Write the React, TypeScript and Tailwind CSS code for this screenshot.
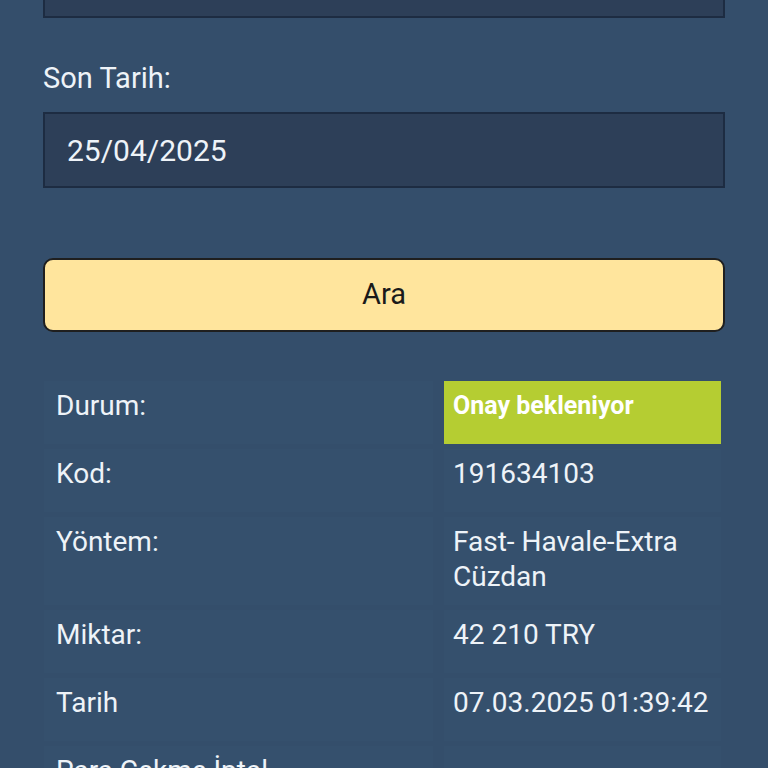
const rows: { label: string; value: string; badge?: boolean }[] = [
  { label: "Durum:", value: "Onay bekleniyor", badge: true },
  { label: "Kod:", value: "191634103" },
  { label: "Yöntem:", value: "Fast- Havale-Extra Cüzdan" },
  { label: "Miktar:", value: "42 210 TRY" },
  { label: "Tarih", value: "07.03.2025 01:39:42" },
  { label: "Para Çekme İptal", value: "" },
];

export default function App() {
  return (
    <div
      className="h-[768px] overflow-hidden bg-[#344e6b] px-[43px] text-[#eef3f8]"
      style={{ fontFamily: "Roboto, 'Noto Sans', sans-serif" }}
    >
      {/* previous field, scrolled mostly out of view */}
      <div className="-mt-[58px] h-[76px] border-2 border-[#1d2c42] bg-[#2d3f58]" />

      <div className="mt-[43px] text-[29px] leading-[35px]">Son Tarih:</div>
      <div className="mt-[16px] flex h-[76px] items-center border-2 border-[#1d2c42] bg-[#2d3f58] pl-[22px] text-[30px]">
        25/04/2025
      </div>

      <button
        type="button"
        className="mt-[70px] flex h-[74px] w-full items-center justify-center rounded-[10px] border-2 border-[#1f1f1f] bg-[#ffe59d] text-[29px] text-[#1a1a1a]"
      >
        Ara
      </button>

      <div className="mt-[49px] ml-px grid grid-cols-[389px_277px] gap-x-[11px] gap-y-[5px]">
        {rows.map((r) => (
          <div key={r.label} className="contents">
            <div className="min-h-[63px] bg-[#35506d] pt-[7px] pb-[11px] pl-[12px] text-[28px] leading-[35px]">
              {r.label}
            </div>
            {r.badge ? (
              <div className="min-h-[63px] bg-[#b5cd32] pt-[7px] pb-[11px] pl-[9px] text-[25px] font-bold leading-[35px] text-white">
                {r.value}
              </div>
            ) : (
              <div className="min-h-[63px] bg-[#35506d] pt-[7px] pb-[11px] pl-[9px] text-[28px] leading-[35px]">
                {r.value}
              </div>
            )}
          </div>
        ))}
      </div>
    </div>
  );
}
